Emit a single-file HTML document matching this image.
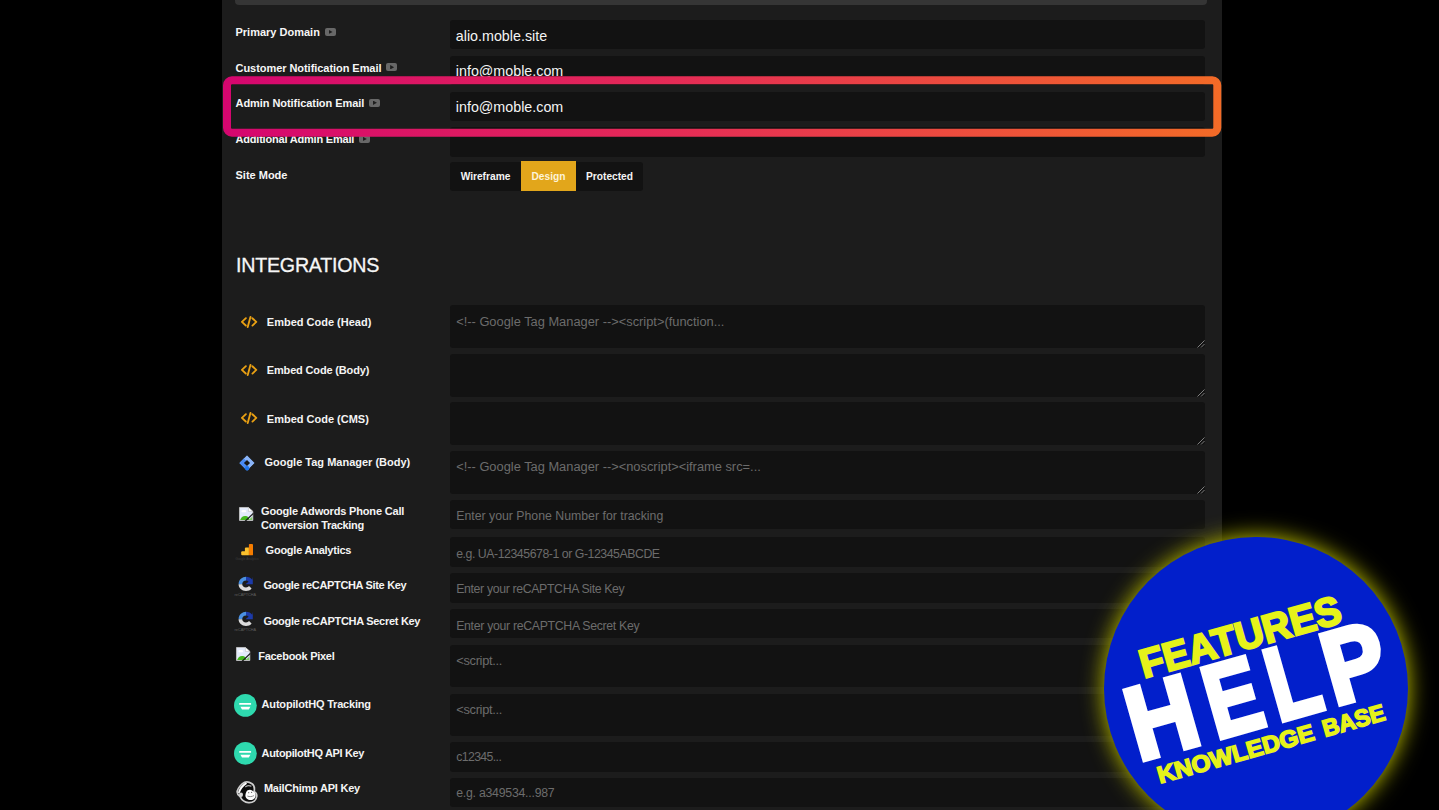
<!DOCTYPE html>
<html lang="en">
<head>
<meta charset="utf-8">
<title>Settings – Integrations</title>
<style>
*{box-sizing:border-box;margin:0;padding:0}
html,body{width:1439px;height:810px;overflow:hidden;background:#000}
body{position:relative;font-family:"Liberation Sans",sans-serif;color:#f4f4f4}
.panel{position:absolute;left:222px;top:0;width:999.7px;height:810px;background:#1c1c1c}
.topbar{position:absolute;left:235.3px;top:0;width:972px;height:5.4px;background:#353535;border-radius:0 0 4px 4px}
.lbl{position:absolute;left:235.5px;font-weight:700;font-size:11px;line-height:14px;white-space:nowrap;color:#f6f6f6}
.vid{display:inline-block;width:11.2px;height:8px;background:#686868;border-radius:2px;margin-left:4.8px;position:relative;vertical-align:.3px}
.vid:after{content:"";position:absolute;left:3.9px;top:1.8px;width:4px;height:4.4px;background:#1f1f1f;clip-path:polygon(0 0,100% 50%,0 100%)}
.inp{position:absolute;left:450.2px;width:755.3px;height:29.4px;background:#121212;border-radius:3px;font-size:14.3px;line-height:30px;padding-left:5.6px;color:#f4f4f4;white-space:nowrap;overflow:hidden}
.ta{position:absolute;left:450.2px;width:755.2px;height:42.8px;background:#121212;border-radius:3px;font-size:12.85px;line-height:15px;padding:8.6px 0 0 6px;color:#6c6c6c;white-space:nowrap;overflow:hidden}
.ph{font-size:12.3px;color:#6c6c6c;padding-left:6px}
.grip{position:absolute;right:0;bottom:0;width:9px;height:9px}
.seg{position:absolute;left:450px;top:161.5px;height:29px;width:193px;background:#121212;border-radius:3px}
.seg span{position:absolute;top:0;height:29px;line-height:30px;font-size:10.2px;font-weight:700;text-align:center;color:#f4f4f4}
.seg .on{background:#e2a61b;top:-0.5px;height:30px;line-height:31px;color:#fdf3d8}
h2{-webkit-text-stroke:.3px #f6f6f6;position:absolute;left:236px;top:252px;font-weight:400;font-size:21px;line-height:26px;letter-spacing:-.25px;transform:scaleX(.936);transform-origin:0 0;color:#f6f6f6;white-space:nowrap}
.il{position:absolute;font-weight:700;font-size:11px;line-height:14.8px;color:#f4f4f4;white-space:nowrap}
svg{position:absolute;overflow:visible}
.badge{position:absolute;left:1104.2px;top:536.7px;width:303.4px;height:303.4px;border-radius:50%;background:#021fcb;box-shadow:0 0 22px .5px rgba(222,224,0,.88),0 0 12px 4px rgba(0,0,0,.55)}
</style>
</head>
<body>
<div class="panel"></div>
<div class="topbar"></div>

<!-- SETTINGS ROWS -->
<div class="lbl" style="top:25.2px">Primary Domain<i class="vid"></i></div>
<div class="inp" style="top:20.1px;line-height:32px">alio.moble.site</div>
<div class="lbl" style="top:60.6px;letter-spacing:-.05px">Customer Notification Email<i class="vid"></i></div>
<div class="inp" style="top:55.8px">info@moble.com</div>
<div class="lbl" style="top:96px;letter-spacing:-.06px">Admin Notification Email<i class="vid"></i></div>
<div class="inp" style="top:91.6px">info@moble.com</div>
<div class="lbl" style="top:132.2px;letter-spacing:-0.2px">Additional Admin Email<i class="vid"></i></div>
<div class="inp" style="top:127.3px"></div>
<div class="lbl" style="top:168px">Site Mode</div>
<div class="seg"><span style="left:0;width:71px">Wireframe</span><span class="on" style="left:71px;width:55px">Design</span><span style="left:126px;width:67px">Protected</span></div>

<svg style="left:0;top:0" width="1439" height="160" viewBox="0 0 1439 160"><defs><linearGradient id="hg" gradientUnits="userSpaceOnUse" x1="223" y1="0" x2="1221" y2="0"><stop offset="0" stop-color="#d5066f"/><stop offset=".45" stop-color="#e52b56"/><stop offset="1" stop-color="#f36b27"/></linearGradient></defs><rect x="227" y="80.3" width="990.3" height="52.4" rx="5" fill="none" stroke="url(#hg)" stroke-width="8"/></svg>

<h2>INTEGRATIONS</h2>


<!-- INTEGRATION ROWS -->
<svg style="left:240.9px;top:315.6px" width="16.6" height="12" viewBox="0 0 18 13"><g fill="none" stroke="#e9a013" stroke-width="2" stroke-linecap="round" stroke-linejoin="round"><path d="M5.3 2.3 1 6.4l4.2 3.9M12.3 2.4l4.3 4-4.2 4M10.3 .9 7.3 12"/></g></svg>
<div class="il" style="left:266.8px;top:314.7px">Embed Code (Head)</div>
<div class="ta" style="top:305.4px">&lt;!-- Google Tag Manager --&gt;&lt;script&gt;(function...<svg class="grip" viewBox="0 0 9 9"><path d="M1.5 8.5 8.5 1.5M5 8.5 8.5 5" stroke="#8a8a8a" stroke-width=".9" fill="none"/></svg></div>

<svg style="left:240.9px;top:364.0px" width="16.6" height="12" viewBox="0 0 18 13"><g fill="none" stroke="#e9a013" stroke-width="2" stroke-linecap="round" stroke-linejoin="round"><path d="M5.3 2.3 1 6.4l4.2 3.9M12.3 2.4l4.3 4-4.2 4M10.3 .9 7.3 12"/></g></svg>
<div class="il" style="left:266.8px;top:363.1px;letter-spacing:-.16px">Embed Code (Body)</div>
<div class="ta" style="top:353.9px"><svg class="grip" viewBox="0 0 9 9"><path d="M1.5 8.5 8.5 1.5M5 8.5 8.5 5" stroke="#8a8a8a" stroke-width=".9" fill="none"/></svg></div>

<svg style="left:240.9px;top:412.4px" width="16.6" height="12" viewBox="0 0 18 13"><g fill="none" stroke="#e9a013" stroke-width="2" stroke-linecap="round" stroke-linejoin="round"><path d="M5.3 2.3 1 6.4l4.2 3.9M12.3 2.4l4.3 4-4.2 4M10.3 .9 7.3 12"/></g></svg>
<div class="il" style="left:266.8px;top:411.5px">Embed Code (CMS)</div>
<div class="ta" style="top:402.3px"><svg class="grip" viewBox="0 0 9 9"><path d="M1.5 8.5 8.5 1.5M5 8.5 8.5 5" stroke="#8a8a8a" stroke-width=".9" fill="none"/></svg></div>

<svg style="left:239.4px;top:455.3px" width="16.2" height="16.2" viewBox="0 0 17 17"><path d="M8.4 .9 15.9 8.4 8.4 15.9 .9 8.4Z" fill="#8ab4f8" stroke="#8ab4f8" stroke-width="1" stroke-linejoin="round"/><path d="M5 4.3 8.6 7.4 5.4 8.4 8.6 12.6 8.4 15.9 .9 8.4Z" fill="#4a8bf5" stroke="#4a8bf5" stroke-width="1" stroke-linejoin="round"/><circle cx="8.6" cy="13.9" r="2.3" fill="#1f74ea"/><path d="M8.4 5.2 11.6 8.4 8.4 11.6 5.2 8.4Z" fill="#161616"/></svg>
<div class="il" style="left:264.4px;top:455.1px">Google Tag Manager (Body)</div>
<div class="ta" style="top:450.8px">&lt;!-- Google Tag Manager --&gt;&lt;noscript&gt;&lt;iframe src=...<svg class="grip" viewBox="0 0 9 9"><path d="M1.5 8.5 8.5 1.5M5 8.5 8.5 5" stroke="#8a8a8a" stroke-width=".9" fill="none"/></svg></div>

<svg style="left:238.7px;top:506.8px" width="14.4" height="14.4" viewBox="0 0 15 15"><path d="M.5 .5H9.8L14.4 4.6V14H.5Z" fill="#e4ebfb" stroke="#cfcfcf" stroke-width=".8"/><path d="M9.8 .5V4.6H14.4Z" fill="#fff" stroke="#bbb" stroke-width=".6"/><ellipse cx="5" cy="4.3" rx="2.6" ry="1.3" fill="#fff"/><path d="M1.2 13.6C2 10.4 4.6 8.8 7.4 9.4 9.6 9.9 10.6 11.8 10.8 13.6Z" fill="#45b81e"/><path d="M10 13.6 13.8 10.2V13.6Z" fill="#7cc862"/><path d="M15 6.6 6.4 14.8" stroke="#1c1c1c" stroke-width="1.3"/></svg>
<div class="il" style="left:261px;top:503.5px;letter-spacing:-.17px">Google Adwords Phone Call<br><span style="letter-spacing:-.31px">Conversion Tracking</span></div>
<div class="inp ph" style="top:499.5px;line-height:32.28px">Enter your Phone Number for tracking</div>

<svg style="left:235px;top:543px" width="24" height="18" viewBox="0 0 24 18"><rect x="13.9" y=".9" width="4.1" height="11.4" rx=".9" fill="#f57c00"/><path d="M9.9 5.4a1 1 0 0 1 1-1h3v7.9H9.9Z" fill="#fbc02d"/><path d="M6.2 9.3a1 1 0 0 1 1-1h2.8v4H7.2a1 1 0 0 1-1-1Z" fill="#fbc02d"/><text x="12" y="17.2" font-family="Liberation Sans, sans-serif" font-size="3.1" fill="#3c3c3c" text-anchor="middle">Google Analytics</text></svg>
<div class="il" style="left:265.6px;top:542.5px;letter-spacing:-.24px">Google Analytics</div>
<div class="inp ph" style="top:537.3px;letter-spacing:-.45px;line-height:34.48px">e.g. UA-12345678-1 or G-12345ABCDE</div>

<svg style="left:234px;top:575.9px" width="24" height="22" viewBox="0 0 24 22"><path d="M4.6 8.2C4.6 3.6 8.4 .8 12 .8l.2 3.6C9.6 4.4 8.3 6 8.2 8.2Z" fill="#4a90e2"/><path d="M12 .8c2.700 0 4.800 1.100 6.200 3L18.800 .8V8.200H11.400L14.600 5.800C13.900 4.900 13 4.400 12 4.400Z" fill="#1c3aa9"/><path d="M4.600 8.200H8.200C8.300 10 9.800 11.400 12 11.400 13.400 11.400 14.400 10.800 15 10L17.600 12.400C16.200 14.200 14.200 14.900 12 14.900 7.800 14.900 4.600 12 4.600 8.200Z" fill="#dcdcdc"/><text x="11.300" y="20.300" font-family="Liberation Sans, sans-serif" font-size="3.8" fill="#606060" text-anchor="middle">reCAPTCHA</text></svg>
<div class="il" style="left:263.4px;top:578.2px;letter-spacing:-.33px">Google reCAPTCHA Site Key</div>
<div class="inp ph" style="top:573.3px;letter-spacing:-.35px;line-height:33.28px">Enter your reCAPTCHA Site Key</div>

<svg style="left:234px;top:611.4px" width="24" height="22" viewBox="0 0 24 22"><path d="M4.6 8.2C4.6 3.6 8.4 .8 12 .8l.2 3.6C9.6 4.4 8.3 6 8.2 8.2Z" fill="#4a90e2"/><path d="M12 .8c2.700 0 4.800 1.100 6.200 3L18.800 .8V8.200H11.400L14.600 5.800C13.900 4.900 13 4.400 12 4.400Z" fill="#1c3aa9"/><path d="M4.600 8.200H8.200C8.300 10 9.800 11.400 12 11.400 13.400 11.400 14.400 10.800 15 10L17.600 12.400C16.200 14.200 14.200 14.900 12 14.900 7.800 14.900 4.600 12 4.600 8.200Z" fill="#dcdcdc"/><text x="11.300" y="20.300" font-family="Liberation Sans, sans-serif" font-size="3.8" fill="#606060" text-anchor="middle">reCAPTCHA</text></svg>
<div class="il" style="left:263.4px;top:613.6px;letter-spacing:-.29px">Google reCAPTCHA Secret Key</div>
<div class="inp ph" style="top:609.1px;letter-spacing:-.31px;line-height:34.08px">Enter your reCAPTCHA Secret Key</div>

<svg style="left:235.8px;top:647.1px" width="14.4" height="14.4" viewBox="0 0 15 15"><path d="M.5 .5H9.8L14.4 4.6V14H.5Z" fill="#e4ebfb" stroke="#cfcfcf" stroke-width=".8"/><path d="M9.8 .5V4.6H14.4Z" fill="#fff" stroke="#bbb" stroke-width=".6"/><ellipse cx="5" cy="4.3" rx="2.6" ry="1.3" fill="#fff"/><path d="M1.2 13.6C2 10.4 4.600 8.800 7.400 9.400 9.600 9.900 10.600 11.800 10.800 13.600Z" fill="#45b81e"/><path d="M10 13.600 13.800 10.200V13.600Z" fill="#7cc862"/><path d="M15 6.600 6.400 14.800" stroke="#1c1c1c" stroke-width="1.300"/></svg>
<div class="il" style="left:258.2px;top:648.7px;letter-spacing:-.27px">Facebook Pixel</div>
<div class="ta" style="top:644.6px;letter-spacing:-.3px">&lt;script...</div>

<svg style="left:234px;top:693.5px" width="23" height="23" viewBox="0 0 23 23"><circle cx="11.4" cy="11.4" r="11.4" fill="#2ed9ae"/><rect x="5.2" y="9.100" width="11.900" height="1.700" rx=".5" fill="#fff"/><path d="M6.400 12.700H16.400L14.800 15.500H8Z" fill="#fff"/></svg>
<div class="il" style="left:261.6px;top:697.2px;letter-spacing:-.19px">AutopilotHQ Tracking</div>
<div class="ta" style="top:693.5px;letter-spacing:-.3px">&lt;script...</div>

<svg style="left:234px;top:742px" width="23" height="23" viewBox="0 0 23 23"><circle cx="11.4" cy="11.4" r="11.4" fill="#2ed9ae"/><rect x="5.2" y="9.100" width="11.900" height="1.700" rx=".5" fill="#fff"/><path d="M6.400 12.700H16.400L14.800 15.500H8Z" fill="#fff"/></svg>
<div class="il" style="left:261.6px;top:745.6px;letter-spacing:-.34px">AutopilotHQ API Key</div>
<div class="inp ph" style="top:742.2px;letter-spacing:-.62px;line-height:31.28px">c12345...</div>

<svg style="left:235.5px;top:780.5px" width="22" height="23" viewBox="0 0 22 23"><path d="M8.600 1.300C5.200 3 1.900 7.200 1.200 10.300 .9 12.600 2.400 14.400 4.100 15.600 5.700 19 8.700 21.300 12.600 21.600 17 21.900 20.500 19.300 20.800 15.200 20.900 13 19.800 11.300 18.200 10.400 18.700 7.400 18.300 4.400 16 2.800 13.800 1.300 10.800 .500 8.600 1.300Z" fill="#0b0b0b" stroke="#cdcdcd" stroke-width="1.700" stroke-linejoin="round"/><path d="M9.900 2.400C6.700 4.500 4.100 7.900 3 11.300" fill="none" stroke="#fff" stroke-width="1.900" stroke-linecap="round"/><ellipse cx="5" cy="13.800" rx="2" ry="2.300" fill="#d6d6d6"/><path d="M10.300 11C11 8.900 14.200 8.100 16.100 9.400 17.700 10.300 19.100 11.400 19.500 13.300 20.200 16.400 17.800 18.900 14.900 19 11.700 19.100 9.200 17.200 9.400 14.200 9.500 13 9.800 11.900 10.300 11Z" fill="#fcfcfc"/><path d="M11.400 15.100C13.500 15.900 16.200 15.700 17.900 14.600" fill="none" stroke="#8a8a8a" stroke-width="1"/><circle cx="12.700" cy="11.700" r=".6" fill="#666"/><circle cx="15.600" cy="11.400" r=".6" fill="#666"/><path d="M9.600 5.700C11.300 4.500 13.500 4.400 15 5.100" fill="none" stroke="#a8a8a8" stroke-width="1.200" stroke-linecap="round"/></svg>
<div class="il" style="left:263.9px;top:781.2px;letter-spacing:-.22px">MailChimp API Key</div>
<div class="inp ph" style="top:777.6px;letter-spacing:-.24px;line-height:31.88px">e.g. a349534...987</div>



<!-- HELP BADGE -->
<div class="badge"></div>
<svg style="left:1103.4px;top:535.9px" width="305" height="305" viewBox="0 0 305 305" role="img" aria-label="FEATURES HELP KNOWLEDGE BASE">
<title>FEATURES HELP KNOWLEDGE BASE</title>
<g transform="rotate(-15.8 152.5 152.5)" font-family="Liberation Sans, sans-serif" font-weight="700" stroke-linejoin="miter">
<text x="48.07" y="112.4" font-size="40" fill="#e6f21a" stroke="#e6f21a" stroke-width="2.3" textLength="207.6" lengthAdjust="spacingAndGlyphs">FEATURES</text>
<text y="190.60" font-size="103.78" fill="#fff" stroke="#fff" stroke-width="5.4"><tspan x="20.04" textLength="68.67" lengthAdjust="spacingAndGlyphs">H</tspan><tspan x="100.85" textLength="54.33" lengthAdjust="spacingAndGlyphs">E</tspan><tspan x="165.40" textLength="50.23" lengthAdjust="spacingAndGlyphs">L</tspan><tspan x="223.84" textLength="61.40" lengthAdjust="spacingAndGlyphs">P</tspan></text>
<text y="218" font-size="23.5" fill="#e6f21a" stroke="#e6f21a" stroke-width="1.6"><tspan x="34.66" textLength="161.95" lengthAdjust="spacingAndGlyphs">KNOWLEDGE</tspan> <tspan x="206.16" textLength="63.94" lengthAdjust="spacingAndGlyphs">BASE</tspan></text>
</g></svg>

</body>
</html>
